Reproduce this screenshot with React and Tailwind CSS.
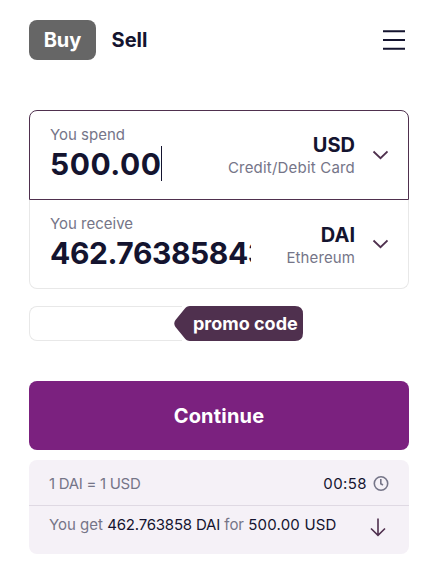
import { useState } from 'react'
import clsx from 'clsx'

const Chevron = () => (
  <svg width="16" height="10" viewBox="0 0 16 10" fill="none" className="shrink-0">
    <path d="M1.5 1.5L8.500 8.200L15.500 1.500" stroke="#4f304e" strokeWidth="1.8" />
  </svg>
)

const Header = ({ mode, setMode }) => {
  const tab = 'h-10 w-[67px] rounded-lg text-[20px] leading-10 font-bold cursor-pointer'

  return (
    <div className="flex h-10 items-center justify-between">
      <div className="flex">
        <button
          className={clsx(tab, mode === 'buy' ? 'bg-[#666666] text-white' : 'text-[#14142f]')}
          onClick={() => setMode('buy')}
        >
          Buy
        </button>
        <button
          className={clsx(tab, mode === 'sell' ? 'bg-[#666666] text-white' : 'text-[#14142f]')}
          onClick={() => setMode('sell')}
        >
          Sell
        </button>
      </div>
      <button className="mr-1 cursor-pointer" aria-label="Menu">
        <svg width="22" height="20" viewBox="0 0 22 20" className="block">
          <path d="M0 1.3H22M0 10H22M0 18.7H22" stroke="#14142f" strokeWidth="2" />
        </svg>
      </button>
    </div>
  )
}

const AmountRow = ({ label, amount, currency, method, active }) => {
  return (
    <div
      className={clsx(
        'flex justify-between border pr-5 pl-5',
        active ? 'h-[90px] rounded-t-lg border-[#4f304e]' : 'h-[89px] rounded-b-lg border-t-0 border-[#e8e8e8]'
      )}
    >
      <div className="w-[201px] overflow-hidden pt-[14px]">
        <p className="text-[15px] leading-5 text-[#757588]">{label}</p>
        <div className="mt-px flex h-9 items-center">
          <span
            className={clsx(
              'text-[30px] leading-9 font-bold whitespace-nowrap text-[#14142f]',
              active ? 'tracking-[0.5px]' : 'tracking-[-0.4px]'
            )}
          >
            {amount}
          </span>
          {active && <span className="-mt-0.5 h-[35px] w-px shrink-0 bg-[#14142f]" />}
        </div>
      </div>
      <div className="flex items-center gap-[17px]">
        <div className={clsx('text-right', active ? 'pt-0.5' : 'pt-[3px]')}>
          <p className="text-[20px] leading-6 font-bold text-[#14142f]">{currency}</p>
          <p
            className={clsx(
              'text-[15px] leading-[22px] whitespace-nowrap text-[#757588]',
              active ? 'tracking-[0.2px]' : 'tracking-[0.1px]'
            )}
          >
            {method}
          </p>
        </div>
        <Chevron />
      </div>
    </div>
  )
}

const PromoCode = () => {
  return (
    <div className="mt-[17px] flex h-[35px]">
      <div className="w-[153px] rounded-l-lg border border-r-0 border-[#e8e8e8]" />
      <div className="relative -ml-2 flex h-[35px] w-[129px] items-center pl-[19px]">
        <svg width="129" height="35" viewBox="0 0 129 35" className="absolute inset-0">
          <path
            d="M16 0H121Q129 0 129 8V27Q129 35 121 35H16Q12.500 35 10.500 32L1.500 21Q-1 17.500 1.500 14L10.500 3Q12.500 0 16 0Z"
            fill="#4f304e"
          />
        </svg>
        <span className="relative text-[18px] leading-5 font-bold whitespace-nowrap text-white">promo code</span>
      </div>
    </div>
  )
}

const Summary = () => {
  return (
    <div className="mt-[10px] h-[94px] rounded-lg bg-[#f5f1f7] text-[15px] text-[#757588]">
      <div className="flex h-[46px] items-center justify-between border-b border-[#dfd9e3] px-5 pt-0.5">
        <span className="pt-0.5 tracking-[-0.3px]">1 DAI = 1 USD</span>
        <span className="flex items-center gap-1.5 text-[#14142f]">
          <span className="pt-0.5 tracking-[0.4px]">00:58</span>
          <svg width="16" height="16" viewBox="0 0 16 16" fill="none" stroke="#757588" strokeWidth="1.6">
            <circle cx="8" cy="7.500" r="6.700" />
            <path d="M7.800 3V7.800L10 9" />
          </svg>
        </span>
      </div>
      <div className="flex justify-between pt-2 pr-[23px] pl-5">
        <p className="leading-[22px] whitespace-nowrap">
          You get <span className="tracking-[-0.2px] text-[#14142f]">462.763858 DAI</span> for{' '}
          <span className="tracking-[0.2px] text-[#14142f]">500.00 USD</span>
        </p>
        <svg width="16" height="19" viewBox="0 0 16 19" fill="none" className="mt-1">
          <path d="M8 0.500V17M1 10.500L8 17.300L15 10.500" stroke="#4f304e" strokeWidth="1.6" />
        </svg>
      </div>
    </div>
  )
}

const App = () => {
  const [mode, setMode] = useState('buy')

  return (
    <div className="h-[562px] w-[439px] overflow-hidden bg-white px-[29px] pt-5 font-['Inter',sans-serif] [&>*]:w-[380px]">
      <Header mode={mode} setMode={setMode} />
      <div className="mt-[50px]">
        <AmountRow label="You spend" amount="500.00" currency="USD" method="Credit/Debit Card" active />
        <AmountRow label="You receive" amount="462.763858432" currency="DAI" method="Ethereum" />
      </div>
      <PromoCode />
      <button className="mt-10 block h-[69px] cursor-pointer rounded-lg bg-[#7b217f] text-[20px] font-bold tracking-[0.2px] text-white">
        Continue
      </button>
      <Summary />
    </div>
  )
}

export default App
